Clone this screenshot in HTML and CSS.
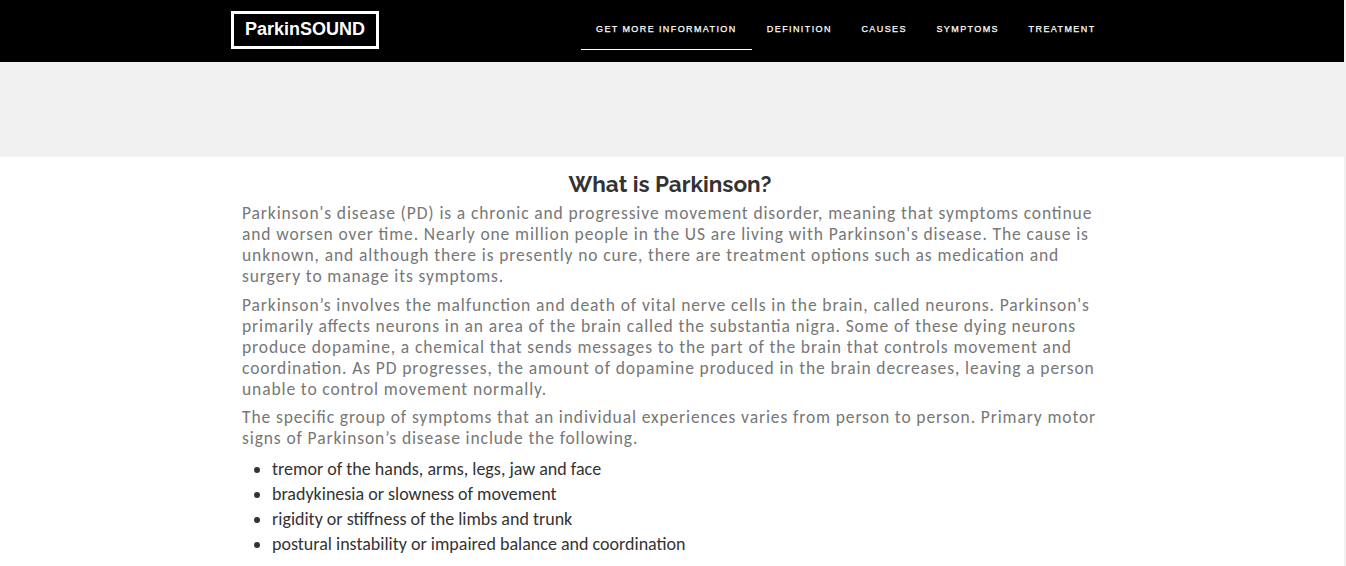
FILE: index.html
```html
<!DOCTYPE html>
<html lang="en">
<head>
<meta charset="utf-8">
<title>ParkinSOUND</title>
<link rel="stylesheet" href="styles.css">
</head>
<body>
<div class="page">
  <header class="navbar">
    <div class="container bar">
      <a class="brand">ParkinSOUND</a>
      <nav class="nav">
        <a class="nav-link active">GET MORE INFORMATION</a>
        <a class="nav-link">DEFINITION</a>
        <a class="nav-link">CAUSES</a>
        <a class="nav-link">SYMPTOMS</a>
        <a class="nav-link">TREATMENT</a>
      </nav>
    </div>
  </header>
  <div class="banner"></div>
  <main class="content">
    <h1 class="title">What is Parkinson?</h1>
    <p class="text">Parkinson's disease (PD) is a chronic and progressive movement disorder, meaning that symptoms continue<br>and worsen over time. Nearly one million people in the US are living with Parkinson's disease. The cause is<br>unknown, and although there is presently no cure, there are treatment options such as medication and<br>surgery to manage its symptoms.</p>
    <p class="text">Parkinson’s involves the malfunction and death of vital nerve cells in the brain, called neurons. Parkinson's<br>primarily affects neurons in an area of the brain called the substantia nigra. Some of these dying neurons<br>produce dopamine, a chemical that sends messages to the part of the brain that controls movement and<br>coordination. As PD progresses, the amount of dopamine produced in the brain decreases, leaving a person<br>unable to control movement normally.</p>
    <p class="text">The specific group of symptoms that an individual experiences varies from person to person. Primary motor<br>signs of Parkinson’s disease include the following.</p>
    <ul class="signs">
      <li>tremor of the hands, arms, legs, jaw and face</li>
      <li>bradykinesia or slowness of movement</li>
      <li>rigidity or stiffness of the limbs and trunk</li>
      <li>postural instability or impaired balance and coordination</li>
    </ul>
  </main>
</div>
</body>
</html>
```
FILE: styles.css
```css
* { box-sizing: border-box; }
body {
  margin: 0;
  height: 566px;
  overflow: hidden;
  background: #f1f1f1;
  font-family: "Liberation Sans", Arial, sans-serif;
}
.page { width: 1344px; height: 566px; background: #fff; }
.navbar { height: 62px; background: #000; }
.container { width: 882px; margin-left: 231px; }
.bar { display: flex; align-items: flex-start; padding-top: 7px; }
.brand {
  flex: none;
  width: 148px;
  height: 38px;
  margin-top: 4px;
  border: 3px solid #fff;
  color: #fff;
  font-size: 18px;
  font-weight: 700;
  line-height: 30px;
  text-align: center;
}
.nav { display: flex; margin-left: 202px; }
.nav-link {
  height: 43px;
  padding: 0 14.6px 0 15px;
  border-bottom: 1px solid transparent;
  color: #fff;
  font-size: 9px;
  -webkit-text-stroke: 0.25px #fff;
  letter-spacing: 1.4px;
  line-height: 44px;
  white-space: nowrap;
}
.active { padding-right: 15.2px; border-color: #fff; }
.banner { height: 95px; background: #f1f1f1; }
.content { padding: 14px 242px 0; }
.title {
  margin: 0 0 6px;
  padding-right: 4px;
  color: #333;
  font-family: Raleway, Lato, sans-serif;
  font-size: 22.5px;
  font-weight: 700;
  line-height: 26px;
  text-align: center;
}
.text {
  margin: 0 0 8px;
  color: #777;
  font-family: Carlito, Lato, sans-serif;
  font-size: 17.5px;
  font-feature-settings: "liga" 1;
  letter-spacing: 0.885px;
  line-height: 21px;
  white-space: nowrap;
}
.text:nth-of-type(2) { margin-bottom: 7px; }
.signs {
  margin: 0;
  padding-left: 30px;
  color: #333;
  font-family: Carlito, Lato, sans-serif;
  font-size: 18px;
  line-height: 25px;
}
```
